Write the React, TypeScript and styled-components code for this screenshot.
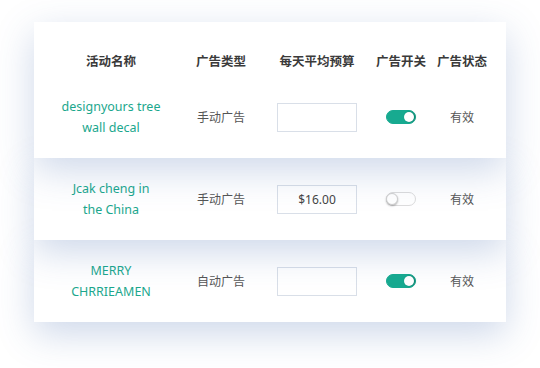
import React, { useState } from 'react';
import styled, { createGlobalStyle } from 'styled-components';

type Campaign = {
  name: string[];
  type: string;
  budget: string;
  enabled: boolean;
  status: string;
};

const campaigns: Campaign[] = [
  { name: ['designyours tree', 'wall decal'], type: '手动广告', budget: '', enabled: true, status: '有效' },
  { name: ['Jcak cheng in', 'the China'], type: '手动广告', budget: '$16.00', enabled: false, status: '有效' },
  { name: ['MERRY', 'CHRRIEAMEN'], type: '自动广告', budget: '', enabled: true, status: '有效' },
];

const columns = ['活动名称', '广告类型', '每天平均预算', '广告开关', '广告状态'];

const App = () => {
  const [rows, setRows] = useState(campaigns);

  const toggle = (index: number) => {
    setRows(rows.map((row, i) => (i === index ? { ...row, enabled: !row.enabled } : row)));
  };

  const setBudget = (index: number) => (e: React.ChangeEvent<HTMLInputElement>) => {
    setRows(rows.map((row, i) => (i === index ? { ...row, budget: e.target.value } : row)));
  };

  return (
    <Page>
      <GlobalStyle />
      <Table>
        {rows.map((row, i) => (
          <Block key={row.name.join(' ')} $layer={rows.length - i}>
            {i === 0 && (
              <HeadRow>
                {columns.map((c) => (
                  <HeadCell key={c}>{c}</HeadCell>
                ))}
              </HeadRow>
            )}
            <BodyRow>
              <Name>
                {row.name.map((line) => (
                  <NameLine key={line}>{line}</NameLine>
                ))}
              </Name>
              <Cell>{row.type}</Cell>
              <BudgetInput value={row.budget} onChange={setBudget(i)} />
              <Switch $on={row.enabled} onClick={() => toggle(i)}>
                <Knob $on={row.enabled} />
              </Switch>
              <Cell>{row.status}</Cell>
            </BodyRow>
          </Block>
        ))}
      </Table>
    </Page>
  );
};

export default App;

const GlobalStyle = createGlobalStyle`
  body {
    margin: 0;
    background: #ffffff;
    font-family: "Noto Sans", "Noto Sans CJK SC", sans-serif;
  }
`;

const Page = styled.div`
  box-sizing: border-box;
  min-height: 100vh;
  padding: 22px 34px;
  width: 540px;
`;

const Table = styled.div`
  display: flex;
  flex-direction: column;
  width: 472px;
`;

// later rows sit under the shadow of the row above
const Block = styled.div<{ $layer: number }>`
  position: relative;
  z-index: ${({ $layer }) => $layer};
  background: #ffffff;
  box-shadow: 0 12px 36px rgba(60, 100, 170, 0.25);
`;

const grid = `
  display: grid;
  grid-template-columns: 154px 66px 126px 42px 80px;
  justify-items: center;
  align-items: center;
`;

const HeadRow = styled.div`
  ${grid};
  height: 54px;
  padding-top: 31px;
  box-sizing: border-box;
  align-items: start;
`;

const HeadCell = styled.div`
  font-size: 12.5px;
  line-height: 18px;
  font-weight: 700;
  color: #3a3a3a;
  white-space: nowrap;
`;

const BodyRow = styled.div`
  ${grid};
  height: 82px;
`;

const Cell = styled.div`
  font-size: 12px;
  color: #555555;
  white-space: nowrap;
`;

const Name = styled.div`
  display: flex;
  flex-direction: column;
  align-items: center;
  font-size: 12.5px;
  line-height: 21px;
  color: #1ba78d;
`;

const NameLine = styled.span`
  white-space: nowrap;
`;

const BudgetInput = styled.input`
  width: 80px;
  height: 29px;
  box-sizing: border-box;
  border: 1px solid #d9dfe8;
  background: #ffffff;
  text-align: center;
  font-family: inherit;
  font-size: 12px;
  color: #444444;
  outline: none;
  padding: 0;
`;

const Switch = styled.div<{ $on: boolean }>`
  width: 30px;
  height: 14px;
  box-sizing: border-box;
  border-radius: 7px;
  border: 1px solid ${({ $on }) => ($on ? '#17aa90' : '#dcdcdc')};
  background: ${({ $on }) => ($on ? '#17aa90' : '#ffffff')};
  display: flex;
  align-items: center;
  justify-content: ${({ $on }) => ($on ? 'flex-end' : 'flex-start')};
  padding: 0 1px;
  cursor: pointer;
`;

const Knob = styled.div<{ $on: boolean }>`
  width: ${({ $on }) => ($on ? '10px' : '12px')};
  height: ${({ $on }) => ($on ? '10px' : '12px')};
  box-sizing: border-box;
  border-radius: 50%;
  background: #ffffff;
  border: ${({ $on }) => ($on ? 'none' : '1px solid #d0d0d0')};
  box-shadow: ${({ $on }) =>
    $on ? '1px 0 2px rgba(0, 60, 50, 0.45)' : '0 1px 2px rgba(0, 0, 0, 0.3)'};
  margin-left: ${({ $on }) => ($on ? '0' : '-2px')};
`;
